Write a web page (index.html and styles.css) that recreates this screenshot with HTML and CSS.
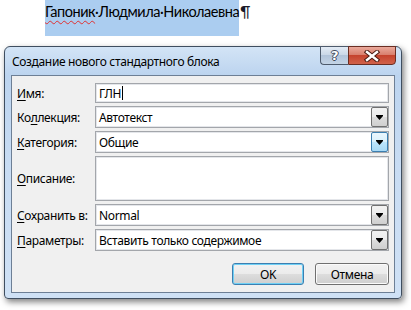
FILE: index.html
```html
<!DOCTYPE html>
<html lang="ru">
<head>
  <meta charset="UTF-8">
  <meta name="viewport" content="width=device-width, initial-scale=1.0">
  <title>Создание нового стандартного блока</title>
  <link rel="stylesheet" href="styles.css">
</head>
<body>

  <div class="doc">
    <span class="selection"><span class="typo">Гапоник</span>·Людмила·Николаевна</span><span class="pilcrow">¶</span>
  </div>

  <div class="dialog">
    <div class="titlebar">
      <span class="title">Создание нового стандартного блока</span>
      <div class="caption-buttons">
        <div class="cap-btn help">?</div>
        <div class="cap-btn close">
          <svg width="16" height="12" viewBox="0 0 16 12">
            <path d="M3 2 L13 10 M13 2 L3 10" stroke="#4a1a12" stroke-width="4.4" stroke-linecap="square"/>
            <path d="M3 2 L13 10 M13 2 L3 10" stroke="#ffffff" stroke-width="2.4" stroke-linecap="square"/>
          </svg>
        </div>
      </div>
    </div>

    <div class="client">
      <div class="form">
        <label class="label"><u>И</u>мя:</label>
        <div class="field"><span>ГЛН</span><span class="caret"></span></div>

        <label class="label">Ко<u>л</u>лекция:</label>
        <div class="field combo">
          <span>Автотекст</span>
          <span class="drop"><svg width="7" height="5" viewBox="0 0 7 5"><path d="M0 0 H7 V1 H0 Z M0 1 H7 L3.5 5 Z" fill="#000"/></svg></span>
        </div>

        <label class="label"><u>К</u>атегория:</label>
        <div class="field combo">
          <span>Общие</span>
          <span class="drop hot"><svg width="7" height="5" viewBox="0 0 7 5"><path d="M0 0 H7 V1 H0 Z M0 1 H7 L3.5 5 Z" fill="#000"/></svg></span>
        </div>

        <label class="label"><u>О</u>писание:</label>
        <div class="field memo"></div>

        <label class="label"><u>С</u>охранить в:</label>
        <div class="field combo">
          <span>Normal</span>
          <span class="drop"><svg width="7" height="5" viewBox="0 0 7 5"><path d="M0 0 H7 V1 H0 Z M0 1 H7 L3.5 5 Z" fill="#000"/></svg></span>
        </div>

        <label class="label"><u>П</u>араметры:</label>
        <div class="field combo">
          <span>Вставить только содержимое</span>
          <span class="drop"><svg width="7" height="5" viewBox="0 0 7 5"><path d="M0 0 H7 V1 H0 Z M0 1 H7 L3.5 5 Z" fill="#000"/></svg></span>
        </div>
      </div>

      <div class="actions">
        <button class="btn default">OK</button>
        <button class="btn cancel">Отмена</button>
      </div>
    </div>
  </div>

</body>
</html>
```

FILE: styles.css
```css
* {
  box-sizing: border-box;
  margin: 0;
  padding: 0;
}

body {
  font-family: "Noto Sans", "Open Sans", sans-serif;
  font-size: 12px;
  letter-spacing: -0.35px;
  background-color: #ffffff;
  color: #000;
  width: 411px;
  height: 310px;
  overflow: hidden;
}

/* document behind the dialog */
.doc {
  height: 46px;
  padding-left: 45px;
  font-family: Lato, "Open Sans", sans-serif;
  font-size: 14.5px;
  letter-spacing: -0.45px;
}

.doc .selection {
  display: inline-block;
  height: 36px;
  padding-top: 3px;
  background-color: #abcdf0;
  vertical-align: top;
}

.doc .typo {
  text-decoration: underline wavy #e03030;
  text-decoration-thickness: 1px;
  text-underline-offset: 3px;
}

.doc .pilcrow {
  display: inline-block;
  padding-top: 3px;
  padding-left: 1px;
  vertical-align: top;
  color: #1a1a2a;
}

/* dialog window */
.dialog {
  width: 398px;
  margin-left: 4px;
  border: 1px solid #3f4e60;
  border-radius: 6px 6px 4px 4px;
  background: linear-gradient(#d3e4f6, #bcd4ef 28px, #c8dcf3 120px, #cfe1f5);
  box-shadow: 2px 3px 6px rgba(0, 0, 0, 0.5);
}

.titlebar {
  height: 28px;
  display: flex;
  justify-content: space-between;
  align-items: flex-start;
  padding-left: 7px;
  padding-right: 5px;
}

.title {
  margin-top: 7px;
  line-height: 16px;
}

.caption-buttons {
  display: flex;
  margin-top: -1px;
}

.cap-btn {
  height: 19px;
  display: flex;
  justify-content: center;
  align-items: center;
  border: 1px solid #4d5a6c;
}

.help {
  width: 28px;
  border-right: none;
  border-radius: 0 0 0 4px;
  background: linear-gradient(#e3ebf5, #cbd8e8 45%, #b2c4da 50%, #c4d4e6);
  color: #ffffff;
  font-family: "DejaVu Sans", sans-serif;
  font-weight: bold;
  font-size: 13px;
  text-shadow: -1px 0 #3f4a5a, 1px 0 #3f4a5a, 0 -1px #3f4a5a, 0 1px #3f4a5a;
}

.close {
  width: 48px;
  border-color: #6a2d22;
  border-radius: 0 0 4px 0;
  background: linear-gradient(#eaa99b, #d9806e 45%, #c5432d 50%, #d1624a);
}

.client {
  margin: 0 6px 5px;
  border: 1px solid #6d7f95;
  background-color: #f0f0f0;
  padding: 7px 0 7px 5px;
}

.form {
  display: grid;
  grid-template-columns: 78px 294px;
  grid-template-rows: 20px 22px 22px 45px 22px 22px;
  row-gap: 3px;
}

.label {
  display: flex;
  align-items: center;
}

.label u {
  text-underline-offset: 2px;
}

.field {
  display: flex;
  align-items: center;
  justify-content: space-between;
  background-color: #ffffff;
  border: 1px solid #a3a6ab;
  box-shadow: inset 0 0 0 1px #e4e6ea;
  padding-left: 3px;
}

.field .caret {
  width: 1px;
  height: 14px;
  background-color: #000;
  margin-left: 1px;
  margin-right: auto;
}

.drop {
  width: 17px;
  height: 20px;
  display: flex;
  justify-content: center;
  align-items: center;
  border: 1px solid #707070;
  border-radius: 2px;
  background: linear-gradient(#f2f2f2, #ebebeb 50%, #dddddd 50%, #cfcfcf);
}

.drop.hot {
  border-color: #3c7fb1;
  background: linear-gradient(#eaf6fd, #d9f0fc 50%, #bee6fd 50%, #a7d9f5);
}

.actions {
  display: flex;
  justify-content: flex-end;
  gap: 11px;
  margin-top: 12px;
  padding-right: 5px;
}

.btn {
  height: 22px;
  font-family: "Noto Sans", "Open Sans", sans-serif;
  font-size: 12px;
  letter-spacing: -0.35px;
  color: #000;
  border: 1px solid #707070;
  border-radius: 3px;
  background: linear-gradient(#f2f2f2, #ebebeb 50%, #dddddd 50%, #cfcfcf);
  box-shadow: inset 0 0 0 1px #fbfbfb;
}

.btn.default {
  width: 72px;
  border-color: #3c7fb1;
  box-shadow: inset 0 0 0 1px #6fd0f5;
}

.btn.cancel {
  width: 74px;
}
```
